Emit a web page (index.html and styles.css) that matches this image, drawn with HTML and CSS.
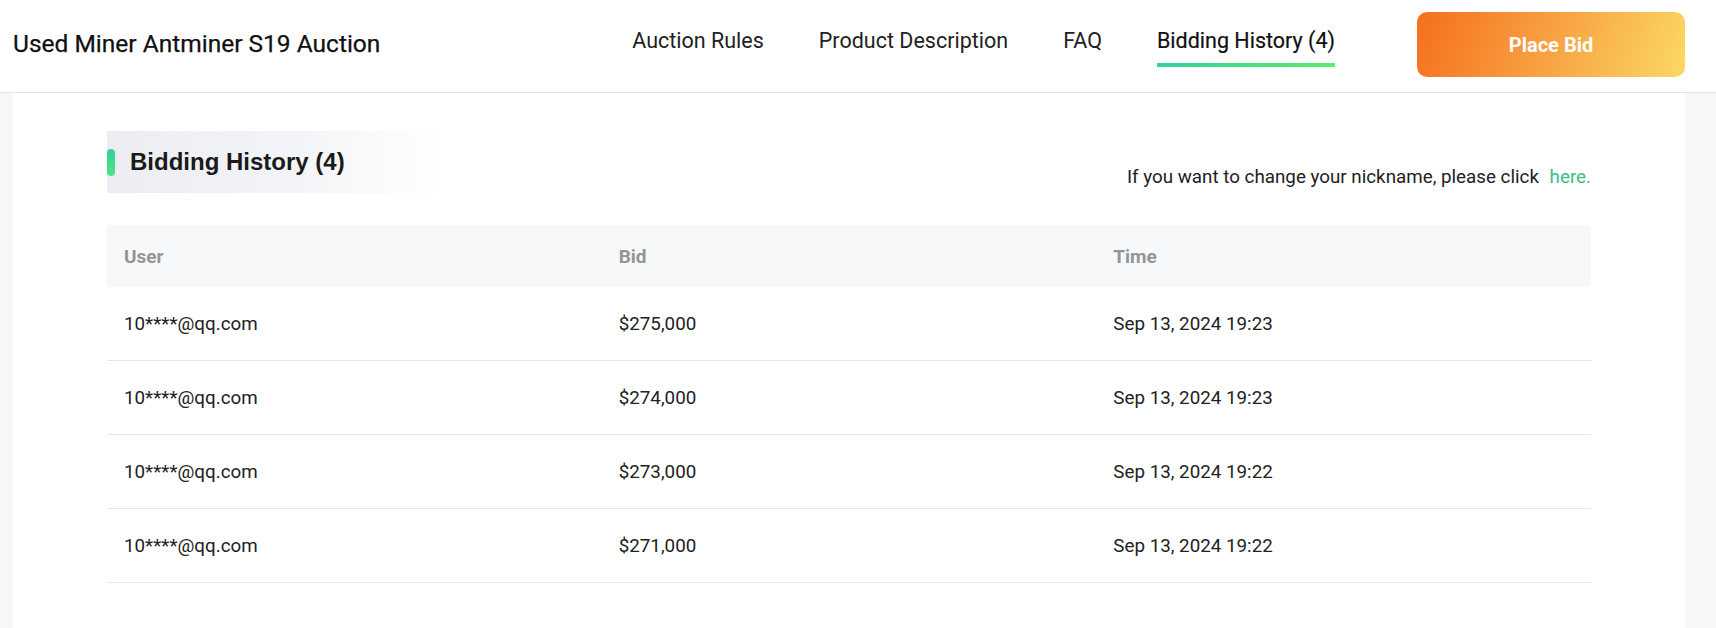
FILE: index.html
```html
<!DOCTYPE html>
<html lang="en">
<head>
<meta charset="utf-8">
<title>Used Miner Antminer S19 Auction</title>
<link rel="stylesheet" href="styles.css">
</head>
<body>
<header class="topbar">
  <h1 class="title">Used Miner Antminer S19 Auction</h1>
  <nav class="tabs">
    <a class="tab">Auction Rules</a>
    <a class="tab">Product Description</a>
    <a class="tab">FAQ</a>
    <a class="tab active">Bidding History (4)</a>
  </nav>
  <button class="bid-btn">Place Bid</button>
</header>
<main class="panel">
  <div class="section-head">
    <div class="section-title">
      <span class="bar"></span>
      <h2>Bidding History (4)</h2>
    </div>
    <p class="nick-note">If you want to change your nickname, please click <a class="link">here.</a></p>
  </div>
  <table class="history">
    <thead>
      <tr><th>User</th><th>Bid</th><th>Time</th></tr>
    </thead>
    <tbody>
      <tr><td>10****@qq.com</td><td>$275,000</td><td>Sep 13, 2024 19:23</td></tr>
      <tr><td>10****@qq.com</td><td>$274,000</td><td>Sep 13, 2024 19:23</td></tr>
      <tr><td>10****@qq.com</td><td>$273,000</td><td>Sep 13, 2024 19:22</td></tr>
      <tr><td>10****@qq.com</td><td>$271,000</td><td>Sep 13, 2024 19:22</td></tr>
    </tbody>
  </table>
</main>
</body>
</html>
```
FILE: styles.css
```css
* { box-sizing: border-box; }
html, body { margin: 0; padding: 0; }
body {
  background: #f7f7f7;
  font-family: Roboto, "Liberation Sans", sans-serif;
  color: #222;
  height: 628px;
  overflow: hidden;
}
.topbar {
  display: flex;
  align-items: center;
  height: 93px;
  background: #fff;
  border-bottom: 1px solid #e4e4e4;
  padding: 0 31px 0 13px;
}
.title {
  margin: 0 0 4px;
  font-size: 24.5px;
  font-weight: 400;
  line-height: 30px;
  color: #111;
  -webkit-text-stroke: 0.25px #111;
}
.tabs {
  margin-left: auto;
  margin-right: 82px;
  display: flex;
  gap: 55px;
}
.tab {
  display: flex;
  flex-direction: column;
  padding-top: 3px;
  font-size: 21.5px;
  line-height: 26px;
  color: #222;
  cursor: pointer;
}
.tab::after {
  content: "";
  display: block;
  height: 4px;
  margin-top: 9px;
  background: transparent;
}
.tab.active { color: #111; -webkit-text-stroke: 0.2px #111; }
.tab.active::after {
  background: linear-gradient(90deg, #36cf9c, #57ee69);
}
.bid-btn {
  width: 268px;
  height: 65px;
  margin-bottom: 3px;
  border: 0;
  border-radius: 10px;
  background: linear-gradient(110deg, #f56f1d 0%, #f8a243 50%, #fbd964 100%);
  color: #fff;
  font-family: Roboto, "Liberation Sans", sans-serif;
  font-size: 20px;
  font-weight: 700;
  cursor: pointer;
}
.panel {
  margin-left: 13px;
  width: 1672px;
  min-height: 535px;
  background: #fff;
  padding: 38px 94px 40px;
}
.section-head {
  display: flex;
  justify-content: space-between;
  align-items: flex-end;
}
.section-title {
  width: 340px;
  height: 62px;
  display: flex;
  align-items: center;
  background: linear-gradient(90deg, #ebedf2 0%, #f3f4f7 55%, #ffffff 100%);
}
.bar {
  width: 8px;
  height: 27px;
  border-radius: 4px;
  background: linear-gradient(180deg, #36cf9c, #4fe584);
  margin-right: 15px;
}
.section-title h2 {
  margin: 0;
  font-family: "Liberation Sans", Arial, sans-serif;
  font-size: 24px;
  font-weight: 700;
  color: #1a1a1a;
}
.nick-note {
  margin: 0 0 3px;
  font-size: 18.8px;
  line-height: 26px;
  color: #222;
}
.link {
  margin-left: 6px;
  color: #3ebd82;
  cursor: pointer;
}
.history {
  margin-top: 32px;
  width: 100%;
  table-layout: fixed;
  border-collapse: separate;
  border-spacing: 0;
}
.history th {
  height: 62px;
  padding: 0 17px;
  background: #f7f8fa;
  text-align: left;
  font-size: 19px;
  font-weight: 700;
  color: #959595;
}
.history td {
  height: 74px;
  padding: 0 17px;
  border-bottom: 1px solid #e6e6e6;
  font-size: 18.8px;
  color: #222;
}
```
